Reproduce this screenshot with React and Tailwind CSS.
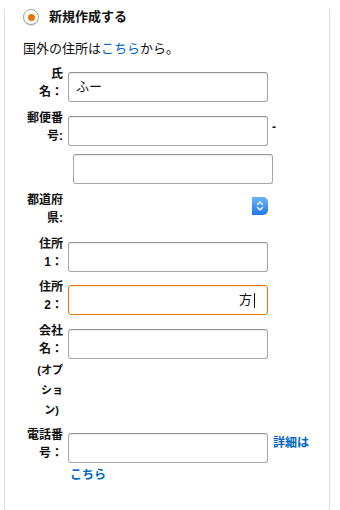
import React from "react";

const inputBox =
  "h-[30px] w-[200px] rounded-[3px] border border-[#a6a6a6] border-t-[#949494] bg-white shadow-[inset_0_1px_0_rgba(0,0,0,0.07)]";

function Label({ lines, children }) {
  return (
    <div className="w-[40px] shrink-0 text-right text-[12px] font-bold leading-[18px] text-[#111]">
      {lines.map((l, i) => (
        <div key={i}>{l}</div>
      ))}
      {children}
    </div>
  );
}

function Field({ className = "", children }) {
  return <div className={`${inputBox} ml-[5px] mt-[7px] ${className}`}>{children}</div>;
}

function SelectArrows() {
  return (
    <svg width="16" height="18" viewBox="0 0 16 18">
      <defs>
        <linearGradient id="sg" x1="0" y1="0" x2="0" y2="1">
          <stop offset="0" stopColor="#6cb3fa" />
          <stop offset="1" stopColor="#1f78ec" />
        </linearGradient>
      </defs>
      <path d="M0 0 H11 A5 5 0 0 1 16 5 V13 A5 5 0 0 1 11 18 H0 Z" fill="url(#sg)" />
      <path d="M5.5 7.5 L8 5 L10.5 7.5" stroke="#fff" strokeWidth="1.4" fill="none" strokeLinecap="round" strokeLinejoin="round" />
      <path d="M5.5 10.5 L8 13 L10.5 10.5" stroke="#fff" strokeWidth="1.4" fill="none" strokeLinecap="round" strokeLinejoin="round" />
    </svg>
  );
}

export default function App() {
  return (
    <div className="relative h-[510px] w-[340px] overflow-hidden bg-white font-['Liberation_Sans','Noto_Sans_CJK_JP',sans-serif] text-[#111]">
      <div className="ml-[4px] h-[506px] w-[326px] rounded-b-[8px] border border-t-0 border-[#ddd] pl-[18px]">
        {/* radio header */}
        <div className="mt-[9px] flex h-[16px] items-center">
          <div className="flex h-[16px] w-[16px] items-center justify-center rounded-full border border-[#a6a6a6] bg-white shadow-[0_1px_1px_rgba(0,0,0,0.15)]">
            <div className="h-[7px] w-[7px] rounded-full bg-[#e77600]" />
          </div>
          <span className="ml-[10px] text-[13px] font-bold leading-[18px]">新規作成する</span>
        </div>

        <div className="mt-[15px] text-[13px] leading-[18px]">
          国外の住所は<span className="text-[#0066c0]">こちら</span>から。
        </div>

        {/* name */}
        <div className="mt-[7px] flex items-start">
          <Label lines={["氏", "名："]} />
          <Field className="flex items-center pl-[7px] text-[13px]">ふー</Field>
        </div>

        {/* postal */}
        <div className="mt-[7px] flex items-start">
          <Label lines={["郵便番", "号:"]} />
          <Field />
          <span className="ml-[4px] mt-[9px] text-[12px] font-bold leading-[18px]">-</span>
        </div>
        <div className={`${inputBox} ml-[50px] mt-[8px]`} />

        {/* prefecture */}
        <div className="mt-[7px] flex items-start">
          <Label lines={["都道府", "県:"]} />
          <div className="ml-[5px] mt-[6px] flex h-[18px] w-[200px] justify-end">
            <SelectArrows />
          </div>
        </div>

        {/* address 1 */}
        <div className="mt-[8px] flex items-start">
          <Label lines={["住所", "1："]} />
          <Field />
        </div>

        {/* address 2 (focused) */}
        <div className="mt-[6px] flex items-start">
          <Label lines={["住所", "2："]} />
          <Field className="flex items-center justify-end border-[#e77600] border-t-[#e77600] pr-[12px] text-[13px] shadow-[0_0_4px_2px_rgba(228,121,17,0.55)]">
            <span>方</span>
            <span className="ml-[2px] h-[15px] w-px bg-[#111]" />
          </Field>
        </div>

        {/* company */}
        <div className="mt-[7px] flex items-start">
          <Label lines={["会社", "名："]}>
            <div className="mt-[2px] text-[11px] leading-[20px]">
              <div>(オプ</div>
              <div>ショ</div>
              <div className="pr-[4px]">ン)</div>
            </div>
          </Label>
          <Field />
        </div>

        {/* phone */}
        <div className="mt-[6px] flex items-start">
          <Label lines={["電話番", "号："]} />
          <Field />
          <span className="ml-[5px] mt-[8px] text-[12px] font-bold leading-[18px] text-[#0066c0]">詳細は</span>
        </div>
        <div className="ml-[47px] mt-[3px] text-[12px] font-bold leading-[18px] text-[#0066c0]">こちら</div>
      </div>
    </div>
  );
}
